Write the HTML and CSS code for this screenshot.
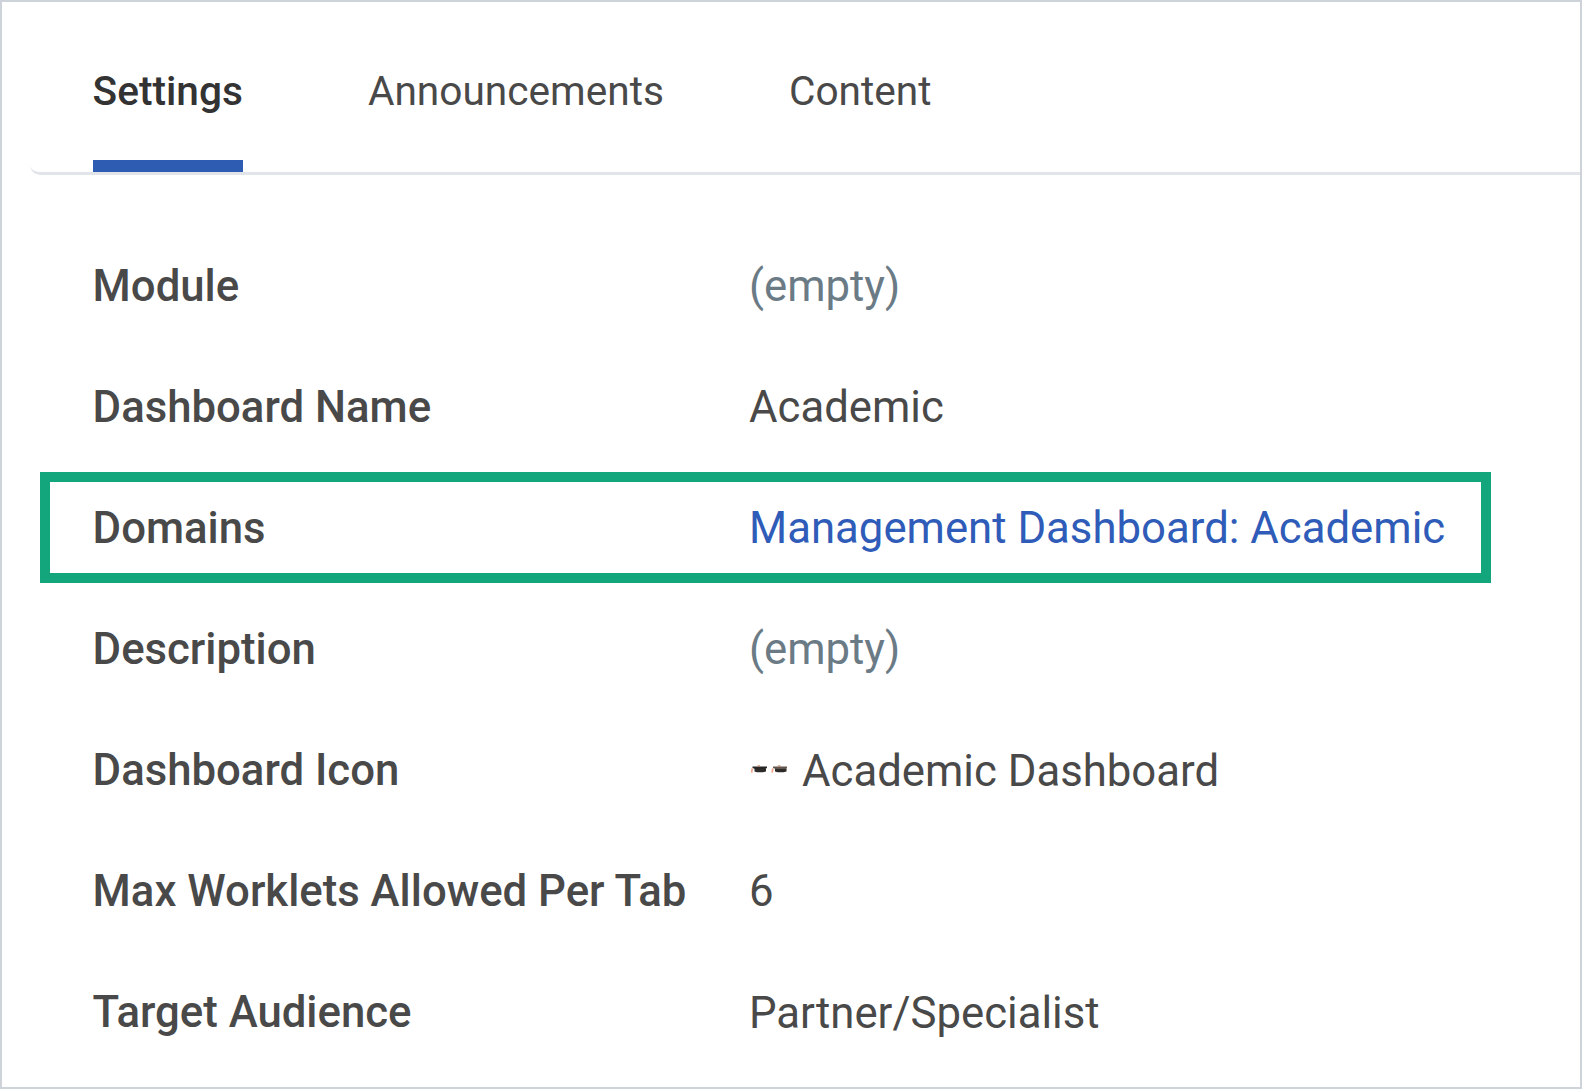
FILE: index.html
```html
<!DOCTYPE html>
<html lang="en">
<head>
<meta charset="utf-8">
<title>Dashboard Settings</title>
<link rel="stylesheet" href="styles.css">
</head>
<body>
<main class="panel">
  <nav class="tabs">
    <a class="tab active">Settings</a>
    <a class="tab">Announcements</a>
    <a class="tab">Content</a>
  </nav>
  <dl class="fields">
    <div class="row"><dt>Module</dt><dd class="empty">(empty)</dd></div>
    <div class="row"><dt>Dashboard Name</dt><dd>Academic</dd></div>
    <div class="row highlight"><dt>Domains</dt><dd><a class="link">Management Dashboard: Academic</a></dd></div>
    <div class="row"><dt>Description</dt><dd class="empty">(empty)</dd></div>
    <div class="row"><dt>Dashboard Icon</dt><dd class="with-icon lowered"><svg class="icon" viewBox="0 0 38 16"><g id="cap"><path d="M5.500 4.500H17V7.400L14 8.200H8L5.500 7.400z" fill="#2d2b2a"/><path d="M3.500 2.500H18V4L16 5H6L3.500 4z" fill="currentColor"/><path d="M8.500 1.900h2.500" stroke="#c77b58"/><path d="M3.300 4.500 2.600 8.700" stroke="#ef9f83" stroke-width="1.600"/></g><use class="cap-light" href="#cap" x="20.500"/></svg><span>Academic Dashboard</span></dd></div>
    <div class="row"><dt>Max Worklets Allowed Per Tab</dt><dd>6</dd></div>
    <div class="row"><dt>Target Audience</dt><dd class="lowered">Partner/Specialist</dd></div>
  </dl>
</main>
</body>
</html>
```

FILE: styles.css
```css
* { box-sizing: border-box; }
body { margin: 0; font-family: Roboto, sans-serif; color: #494949; background: #fff; }
.panel { height: 1089px; border: 2px solid #ced3d9; overflow: hidden; }
.tabs { display: flex; gap: 125px; height: 173px; margin-left: 28px; padding-left: 62.6px; border-bottom: 3px solid #e1e5e9; border-bottom-left-radius: 10px; }
.tab { height: 170px; padding-top: 65px; font-size: 40.64px; line-height: 48px; }
.tab.active { font-weight: 500; color: #333; border-bottom: 12px solid #2f5cb3; }
.fields { margin: 55px 0 0 38px; }
.row { display: grid; grid-template-columns: 656.4px 1fr; align-items: center; width: 1451px; height: 111px; margin-bottom: 10px; padding: 1px 0 0 52.6px; font-size: 43.72px; line-height: 52px; white-space: nowrap; }
.highlight { padding-left: 42.6px; border: 10px solid #13a67d; }
dt { font-weight: 500; }
dd { margin: 0; }
.lowered { padding-top: 2px; }
.empty { color: #6b7b86; }
.link { color: #2f5cb8; }
.with-icon { display: flex; align-items: center; gap: 15px; }
.icon { width: 38px; height: 16px; margin-top: 1px; color: #282625; }
.cap-light { color: #62564e; }
```
